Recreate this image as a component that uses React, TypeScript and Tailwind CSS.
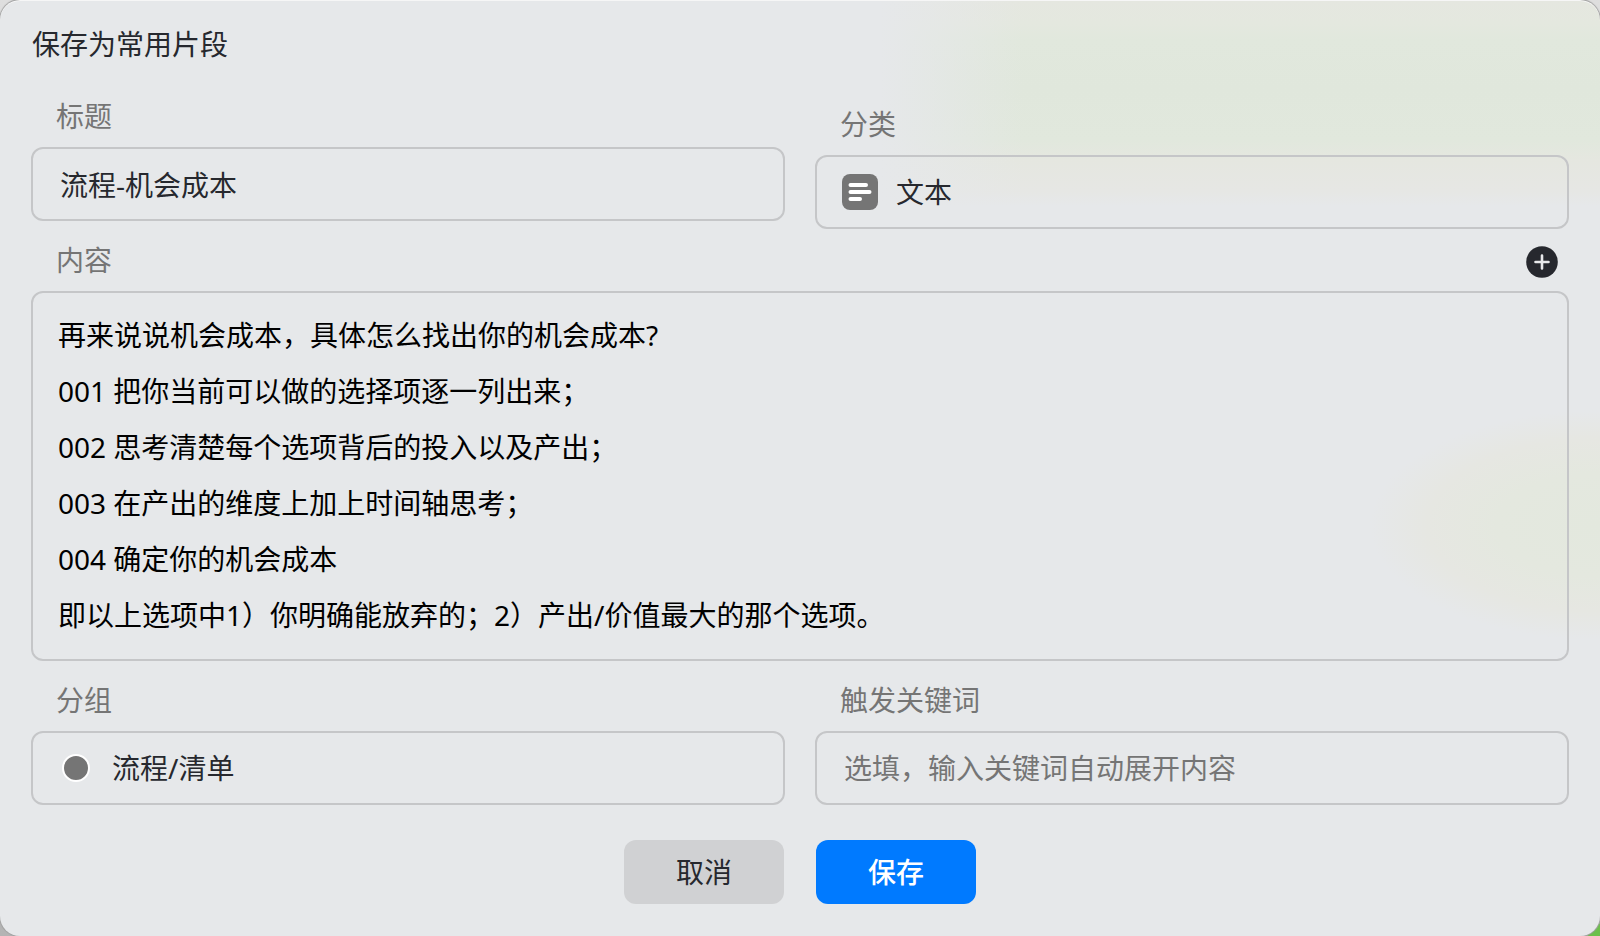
import React, { useState } from 'react';

const CATEGORIES = ['文本', '链接', '图片'];
const GROUPS = ['流程/清单', '常用回复', '未分组'];

const DEFAULT_CONTENT = [
  '再来说说机会成本，具体怎么找出你的机会成本?',
  '001 把你当前可以做的选择项逐一列出来；',
  '002 思考清楚每个选项背后的投入以及产出；',
  '003 在产出的维度上加上时间轴思考；',
  '004 确定你的机会成本',
  '即以上选项中1）你明确能放弃的；2）产出/价值最大的那个选项。'
].join('\n');

const boxClass = 'flex items-center w-full h-[74px] rounded-xl border-2 border-[#c5c6c8] text-[#26282e]';

interface FieldLabelProps {
  htmlFor: string;
  children: React.ReactNode;
}

const FieldLabel: React.FC<FieldLabelProps> = ({ htmlFor, children }) => (
  <label htmlFor={htmlFor} className="block pl-[25px] text-[#757575]">
    {children}
  </label>
);

interface PickerProps {
  id: string;
  value: string;
  options: string[];
  onChange: (value: string) => void;
}

const Picker: React.FC<PickerProps> = ({ id, value, options, onChange }) => (
  <select
    id={id}
    value={value}
    onChange={e => onChange(e.target.value)}
    className="flex-1 min-w-0 h-full appearance-none bg-transparent outline-none"
  >
    {options.map(option => (
      <option key={option} value={option}>{option}</option>
    ))}
  </select>
);

const TextIcon = () => (
  <svg className="h-9 w-9 shrink-0" viewBox="0 0 36 36" aria-hidden="true">
    <rect width="36" height="36" rx="8" fill="#757575" />
    <path
      d="M8.5 11H24M8.5 18H27.5M8.5 25H18"
      stroke="#fff"
      strokeWidth="4"
      strokeLinecap="round"
    />
  </svg>
);

const PlusIcon = () => (
  <svg className="h-8 w-8" viewBox="0 0 32 32" aria-hidden="true">
    <circle cx="16" cy="16" r="15.8" fill="#26282e" />
    <path d="M16 9.5V22.5M9.5 16H22.5" stroke="#e7e8ea" strokeWidth="2.6" strokeLinecap="round" />
  </svg>
);

const App: React.FC = () => {
  const [title, setTitle] = useState('流程-机会成本');
  const [category, setCategory] = useState(CATEGORIES[0]);
  const [content, setContent] = useState(DEFAULT_CONTENT);
  const [group, setGroup] = useState(GROUPS[0]);
  const [keyword, setKeyword] = useState('');

  return (
    <main className="flex min-h-screen bg-[radial-gradient(circle_at_100%_100%,#6cc04a_0,#6cc04a_12px,transparent_13px),linear-gradient(#dedede,#b4b4b4)] font-['Noto_Sans','Noto_Sans_CJK_SC',sans-serif] text-[28px] leading-[40px]">
      <form
        onSubmit={e => e.preventDefault()}
        className="flex-1 rounded-[20px] px-[31px] pt-6 pb-8 bg-[#e6e8ea] bg-[radial-gradient(ellipse_230px_115px_at_100%_525px,#e3e8de_0%,#e4e8df_45%,#e6e7e2_75%,transparent_100%),linear-gradient(90deg,#e6e8ea_55%,transparent_64%),linear-gradient(#e5e7e0_0,#e4e8df_24px,#e1e8dd_40px,#e0e7dc_90px,#e1e8dd_140px,#e5e7e0_160px,#e6e7e4_190px,#e6e8ea_206px)] shadow-[inset_0_1px_0_#f6f6f6,0_0_1px_1px_#a0a0a0]"
      >
        <h1 className="pl-px text-[#26282e]">保存为常用片段</h1>

        <div className="mt-8 grid grid-cols-2 gap-x-[30px]">
          <div className="flex flex-col gap-[11px]">
            <FieldLabel htmlFor="title">标题</FieldLabel>
            <input
              id="title"
              value={title}
              onChange={e => setTitle(e.target.value)}
              className={`${boxClass} px-[27px] bg-transparent outline-none`}
            />
          </div>
          <div className="mt-2 flex flex-col gap-[11px]">
            <FieldLabel htmlFor="category">分类</FieldLabel>
            <div className={`${boxClass} px-[25px] gap-[18px]`}>
              <TextIcon />
              <Picker id="category" value={category} options={CATEGORIES} onChange={setCategory} />
            </div>
          </div>
        </div>

        {/* Snippet body */}
        <div className="mt-[11px] flex flex-col gap-[11px]">
          <div className="flex items-center justify-between pr-[11px]">
            <FieldLabel htmlFor="content">内容</FieldLabel>
            <button type="button" aria-label="插入" className="mt-1 rounded-full">
              <PlusIcon />
            </button>
          </div>
          <textarea
            id="content"
            rows={6}
            value={content}
            onChange={e => setContent(e.target.value)}
            className="block w-full resize-none overflow-hidden rounded-xl border-2 border-[#c5c6c8] bg-transparent px-[25px] pt-[14px] pb-4 leading-[56px] text-black outline-none"
          />
        </div>

        <div className="mt-[19px] grid grid-cols-2 gap-x-[30px]">
          <div className="flex flex-col gap-[11px]">
            <FieldLabel htmlFor="group">分组</FieldLabel>
            <div className={`${boxClass} px-[29px] gap-[22px]`}>
              <span className="h-7 w-7 shrink-0 rounded-full border-2 border-white bg-[#757575]" />
              <Picker id="group" value={group} options={GROUPS} onChange={setGroup} />
            </div>
          </div>
          <div className="flex flex-col gap-[11px]">
            <FieldLabel htmlFor="keyword">触发关键词</FieldLabel>
            <input
              id="keyword"
              value={keyword}
              onChange={e => setKeyword(e.target.value)}
              placeholder="选填，输入关键词自动展开内容"
              className={`${boxClass} px-[27px] bg-transparent outline-none placeholder:text-[#757575]`}
            />
          </div>
        </div>

        {/* Actions */}
        <div className="mt-[35px] flex justify-center gap-8">
          <button type="button" className="h-16 w-40 rounded-xl bg-[#d0d1d3] text-[#26282e]">
            取消
          </button>
          <button type="submit" className="h-16 w-40 rounded-xl bg-[#007aff] font-medium text-white">
            保存
          </button>
        </div>
      </form>
    </main>
  );
};

export default App;
